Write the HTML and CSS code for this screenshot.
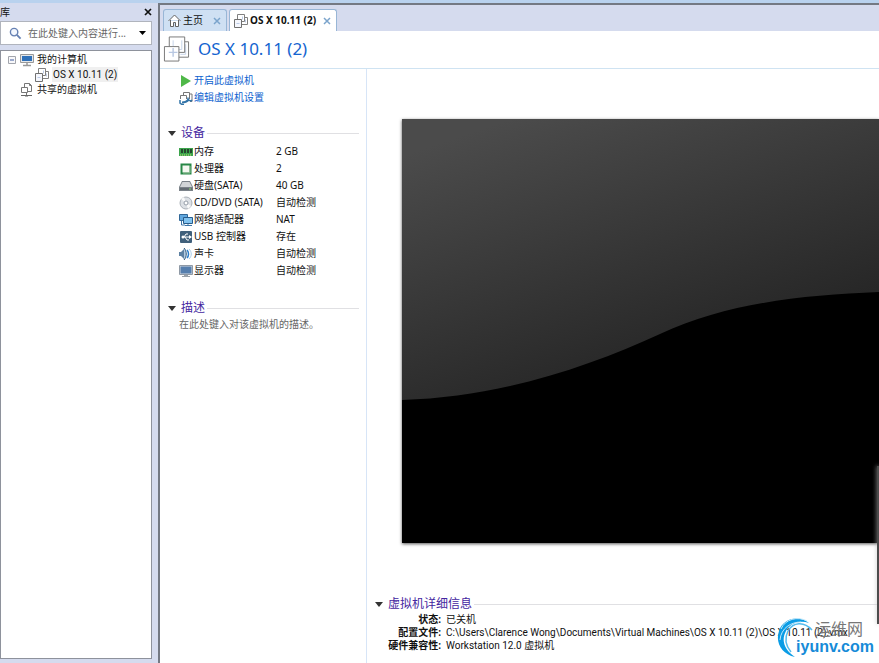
FILE: index.html
```html
<!DOCTYPE html>
<html lang="zh-CN">
<head>
<meta charset="utf-8">
<title>OS X 10.11 (2)</title>
<link rel="stylesheet" href="styles.css">
</head>
<body>
<svg class="defs" width="0" height="0" aria-hidden="true">
  <symbol id="vm" viewBox="0 0 28 28">
    <path d="M10.500 6.500h16v16h-16z" fill="#fff" stroke="#777"/>
    <path d="M23.500 9v10.500H18" fill="none" stroke="#c5d2e8"/>
    <path d="M6.500 1.500h16v16h-16z" fill="#fff" stroke="#777"/>
    <path d="M10.500 5v6M19.500 5v9.500H13" fill="none" stroke="#c5d2e8"/>
    <path d="M1.500 11.500h15v15h-15z" fill="#fff" stroke="#777"/>
    <path d="M6 17.500h4.500V13M10.500 17.500V22M10 17.500h5" fill="none" stroke="#b9c8e2" stroke-width="1.500"/>
  </symbol>
  <symbol id="vm-small" viewBox="0 0 14 14">
    <path d="M5.500 3.500h8v7h-8z" fill="#fff" stroke="#808080"/>
    <path d="M3.500.5h7v7h-7z" fill="#fff" stroke="#808080"/>
    <path d="M.5 5.500h7v8h-7z" fill="#f5f7fd" stroke="#707070"/>
    <path d="M2.500 9.500h3M8.500 2.500v3M11.500 5.500v3" stroke="#bccbe6"/>
  </symbol>
</svg>
<div class="app">
  <aside class="library">
    <header class="library-head"><h2>库</h2><button class="close" aria-label="关闭库"><svg viewBox="0 0 8 8"><path d="M1 1l6 6M7 1L1 7" stroke="#111" stroke-width="1.700"/></svg></button></header>
    <div class="search">
      <svg class="lens" viewBox="0 0 14 14"><circle cx="5.500" cy="5.500" r="4" fill="#f4f8ff" stroke="#6681b3" stroke-width="1.500"/><path d="M8.500 8.500l4 4" stroke="#6681b3" stroke-width="2"/></svg>
      <input type="text" aria-label="搜索" placeholder="在此处键入内容进行...">
      <button class="drop" aria-label="搜索选项"><svg viewBox="0 0 7 4"><path d="M0 0h7L3.500 4z"/></svg></button>
    </div>
    <ul class="tree">
      <li><div class="node"><button class="toggle" aria-label="折叠"><svg viewBox="0 0 9 9"><path d="M1.500 1.500h7v7h-7z" fill="#f8f8fa" stroke="#a2a5ac"/><path d="M3 5h4" stroke="#3d5aa0"/></svg></button>
        <svg class="ico" viewBox="0 0 14 14"><path d="M.5 1.500h13v8H.5z" fill="#e4e7ea" stroke="#999"/><path d="M2 3h10v5H2z" fill="#2f70b8"/><path d="M7 10v2M3 12.500h8" stroke="#999" stroke-width="1.500"/></svg><span>我的计算机</span></div>
        <ul><li><div class="node child"><svg class="ico"><use href="#vm-small"/></svg><span class="selected">OS X 10.11 (2)</span></div></li></ul></li>
      <li><div class="node shared"><svg class="ico" viewBox="0 0 14 14"><path d="M4.500 4V.5h5l2 2v6H8M9.500.5v2h2M1.500 4.500h6v5h-6zM6.500 10v2" fill="none" stroke="#777"/><path d="M1 12.500h4M8 12.500h4" stroke="#666"/><path d="M5 12h3v1.500H5z" fill="#666"/></svg><span>共享的虚拟机</span></div></li>
    </ul>
  </aside>
  <main class="workspace">
    <nav class="tabs">
      <div class="tab home"><a href="#home"><svg class="home-ico" viewBox="0 0 13 13"><path d="M.5 7l6-6 6 6M2.500 6v6.500h3v-4h2v4h3V6" fill="#fff" stroke="#626262"/></svg>主页</a><button class="close" aria-label="关闭主页"><svg viewBox="0 0 8 8"><path d="M1 1l6 6M7 1L1 7" stroke="#7ba4cc" stroke-width="1.500"/></svg></button></div>
      <div class="tab active"><a href="#vm-page"><svg class="ico"><use href="#vm-small"/></svg>OS X 10.11 (2)</a><button class="close" aria-label="关闭虚拟机"><svg viewBox="0 0 8 8"><path d="M1 1l6 6M7 1L1 7" stroke="#7ba4cc" stroke-width="1.500"/></svg></button></div>
    </nav>
    <header class="title"><svg><use href="#vm"/></svg><h1>OS X 10.11 (2)</h1></header>
    <div class="content">
      <section class="settings">
        <div class="actions">
          <a href="#start"><svg viewBox="0 0 14 14"><path d="M2 1l10 6-10 6z" fill="#4fb848"/></svg>开启此虚拟机</a>
          <a href="#edit"><svg viewBox="0 0 14 14"><path d="M4.500 4V1.500h6V3H13v7.500h-2M10.500 3v5M1.500 8V4.500h6V8" fill="none" stroke="#777"/><path d="M3 11.500c4 0 5-1 7-3" fill="none" stroke="#3274a8" stroke-width="2"/><path d="M1 9v3l2 1.500h2M9 6.500V9l3 1 1-1" fill="none" stroke="#3274a8" stroke-width="1.500"/></svg>编辑虚拟机设置</a>
        </div>
        <h2 class="section"><svg viewBox="0 0 8 5"><path d="M0 0h8L4 5z"/></svg>设备</h2>
        <table class="devices">
          <tr><th><svg viewBox="0 0 14 14"><path d="M0 3h14v8H0z" fill="#3ca44c"/><path d="M2 4h2v4H2zM5 4h2v4H5zM8 4h2v4H8zM11 4h2v4h-2z" fill="#24482c"/><path d="M1 10h12" stroke="#c7dc79" stroke-dasharray="1 1"/></svg>内存</th><td>2 GB</td></tr>
          <tr><th><svg viewBox="0 0 14 14"><path d="M2.500 2.500h9v9h-9z" fill="#f4f8f1" stroke="#278746" stroke-width="2"/><path d="M4 11h7V4" fill="none" stroke="#91bd94"/></svg>处理器</th><td>2</td></tr>
          <tr><th><svg viewBox="0 0 14 14"><path d="M3 2h8l3 6v4H0V8z" fill="#7b8289"/><path d="M3.500 3h7L13 8H1z" fill="#d2d5d8"/><path d="M1 10h12" stroke="#4f565e"/><path d="M10 10h2" stroke="#8cda72"/></svg>硬盘(SATA)</th><td>40 GB</td></tr>
          <tr><th><svg viewBox="0 0 14 14"><circle cx="7" cy="7" r="6" fill="#dce0e5" stroke="#aab0b8"/><path d="M7 7L2 3l3-2zM7 7l5 3-3 3z" fill="#fafafa"/><circle cx="7" cy="7" r="2" fill="#fff" stroke="#959da8"/></svg>CD/DVD (SATA)</th><td>自动检测</td></tr>
          <tr><th><svg viewBox="0 0 14 14"><path d="M.5 1.500h8v6h-8z" fill="#61a8df" stroke="#316797"/><path d="M4.500 4.500h9v6h-9z" fill="#82c3ef" stroke="#285c8b"/><path d="M2.500 8v4H6M6 12.500h7M9 11v1" fill="none" stroke="#3d76a9"/></svg>网络适配器</th><td>NAT</td></tr>
          <tr><th><svg viewBox="0 0 14 14"><rect x="1" y="1" width="12" height="12" rx="1" fill="#40607b"/><path d="M3 7h9M5 7l2-3h2M6 7l2 3h2" fill="none" stroke="#fff"/><circle cx="4" cy="7" r="1.500" fill="#fff"/><path d="M10 5l3 2-3 2z" fill="#fff"/></svg>USB 控制器</th><td>存在</td></tr>
          <tr><th><svg viewBox="0 0 14 14"><path d="M0 5h2l4-4v12L2 9H0z" fill="#5d81a3"/><path d="M5 1c3 3 3 9 0 12" fill="#b4cbe0" stroke="#315a7d"/><path d="M8 3c2 2 2 6 0 8" fill="none" stroke="#2b7ecb" stroke-width="1.500"/><path d="M10 2c3 3 3 7 0 10" fill="none" stroke="#a7cbe8"/></svg>声卡</th><td>自动检测</td></tr>
          <tr><th><svg viewBox="0 0 14 14"><path d="M.5 1.500h13v9H.5z" fill="#d4d9df" stroke="#8f99a5"/><path d="M1.500 2.500h11v7h-11z" fill="#567fae"/><path d="M5 11h4v1.500H5zM3 12h8v1H3z" fill="#9aa2aa"/></svg>显示器</th><td>自动检测</td></tr>
        </table>
        <h2 class="section"><svg viewBox="0 0 8 5"><path d="M0 0h8L4 5z"/></svg>描述</h2>
        <p class="description">在此处键入对该虚拟机的描述。</p>
      </section>
      <section class="overview">
        <svg class="preview" viewBox="0 0 477 424" preserveAspectRatio="none" role="img" aria-label="虚拟机屏幕">
          <defs><linearGradient id="shade" gradientUnits="userSpaceOnUse" x1="50" y1="20" x2="162" y2="350"><stop stop-color="#4b4b4b"/><stop offset="1" stop-color="#1e1e1e"/></linearGradient></defs>
          <path d="M0 0h477v424H0z" fill="url(#shade)"/>
          <path d="M0 281C100 278 188 247 258 215C325 184 400 176 477 173V424H0z" fill="#000"/>
        </svg>
        <div class="details">
          <h2 class="section"><svg viewBox="0 0 8 5"><path d="M0 0h8L4 5z"/></svg>虚拟机详细信息</h2>
          <dl>
            <dt>状态:</dt><dd>已关机</dd>
            <dt>配置文件:</dt><dd>C:\Users\Clarence Wong\Documents\Virtual Machines\OS X 10.11 (2)\OS X 10.11 (2).vmx</dd>
            <dt>硬件兼容性:</dt><dd>Workstation 12.0 虚拟机</dd>
          </dl>
        </div>
      </section>
    </div>
  </main>
</div>
<div class="window-edge"></div>
<div class="watermark">
  <svg viewBox="0 0 40 44"><path d="M33 7C23-1 7 2 3 15c-4 12 3 23 16 26C8 34 5 24 10 15 15 6 25 4 33 7z" fill="#0a9ce5"/><path d="M36 14C28 5 17 6 12 15c-4 8-2 15 3 21" fill="none" stroke="#54bbed" stroke-width="1.500"/><path d="M5 13C9 3 22 0 31 5M4 24C5 12 15 6 25 6" fill="none" stroke="#c5e9fa"/></svg>
  <div><span class="mark-cn">运维网</span><span class="mark-url">iyunv.com</span></div>
</div>
</body>
</html>
```

FILE: styles.css
```css
* { box-sizing: border-box; }
body {
  margin: 0;
  position: relative;
  overflow: hidden;
  background: #d5dbee;
  color: #111;
  font: 10px/15px "Noto Sans", "Noto Sans CJK SC", sans-serif;
}
h1, h2, p, ul, dl, dd { margin: 0; padding: 0; font-weight: 400; }
ul { list-style: none; }
a { color: inherit; text-decoration: none; }
button { border: 0; padding: 0; background: none; display: flex; }
svg { display: block; flex: none; }
.defs { position: absolute; }
.ico { width: 14px; height: 14px; }
.close svg { width: 8px; height: 8px; }

.app {
  display: grid;
  grid-template-columns: 152px minmax(0, 1fr);
  column-gap: 6px;
  height: 100vh;
  border-top: 3px solid #b9d2ee;
}
.library { display: flex; flex-direction: column; padding-bottom: 5px; }
.library-head { display: flex; justify-content: space-between; align-items: center; height: 18px; }
.library-head h2 { font-size: 10px; }
.search {
  display: flex;
  align-items: center;
  height: 24px;
  border: 1px solid #b0b4bd;
  background: #fff;
  padding: 0 5px 0 8px;
}
.lens { width: 13px; height: 13px; }
.search input { flex: 1; min-width: 0; border: 0; outline: 0; padding: 0 0 0 6px; font: inherit; background: none; }
.search input::placeholder { color: #666; opacity: 1; }
.drop svg { width: 7px; height: 4px; }
.tree { flex: 1; margin-top: 5px; padding-top: 1px; border: 1px solid #8e929c; background: #fff; }
.node { display: flex; align-items: center; height: 15px; gap: 3px; padding-left: 6px; }
.toggle { margin-right: 1px; }
.toggle svg { width: 9px; height: 9px; }
.child { padding-left: 34px; }
.shared { padding-left: 19px; }
.selected { background: #f0f0f0; padding: 0 1px; font-family: Roboto, "Noto Sans CJK SC", sans-serif; }

.workspace {
  display: flex;
  flex-direction: column;
  border: solid #747983;
  border-width: 2px 0 0 2px;
  background: #fff;
}
.tabs { display: flex; align-items: flex-end; gap: 2px; height: 26px; padding-left: 3px; background: #d5dbee; }
.tab {
  display: flex;
  align-items: center;
  justify-content: space-between;
  height: 22px;
  padding: 0 5px 0 4px;
  border: 1px solid #98b6d6;
  border-bottom: 0;
  border-radius: 3px 3px 0 0;
  background: #cfe0f3;
}
.tab a { display: flex; align-items: center; gap: 2px; }
.home { width: 64px; }
.home-ico { width: 13px; height: 13px; }
.active { width: 108px; background: #fff; font-weight: 700; }
.title { display: flex; align-items: center; gap: 8px; height: 38px; padding: 0 0 2px 3px; border-bottom: 1px solid #cfe3f2; }
.title svg { width: 27px; height: 28px; }
.title h1 { font-size: 17px; line-height: 24px; color: #1464d0; }

.content { flex: 1; display: grid; grid-template-columns: 207px minmax(0, 1fr); min-height: 0; }
.settings { padding: 3px 7px 0 8px; border-right: 1px solid #d7e5f7; }
.actions { padding-left: 11px; color: #0d62cf; }
.actions a { display: flex; align-items: center; gap: 1px; height: 17px; }
.actions svg, .devices svg { width: 14px; height: 14px; }
.section { display: flex; align-items: center; gap: 5px; height: 18px; font-size: 12px; line-height: 18px; color: #4426a0; white-space: nowrap; }
.section svg { width: 8px; height: 5px; fill: #333; }
.section::after { content: ""; flex: 1; height: 1px; margin-left: -3px; background: #e0e0e3; }
.actions + .section { margin-top: 18px; }
.devices { width: 100%; margin-top: 1px; border-collapse: collapse; }
.devices th, .devices td { height: 17px; padding: 0; line-height: 17px; font-weight: 400; text-align: left; white-space: nowrap; }
.devices th { display: flex; align-items: center; gap: 1px; padding-left: 11px; }
.devices td { width: 83px; }
.devices + .section { margin-top: 20px; }
.description { padding-left: 11px; color: #666; }

.overview { display: flex; flex-direction: column; padding: 50px 0 12px 8px; min-width: 0; }
.preview { flex: 1; min-height: 0; width: calc(100% - 27px); margin-left: 27px; box-shadow: 0 1px 3px #555; }
.details { margin-top: 52px; }
.details dl { display: grid; grid-template-columns: 66px minmax(0, 1fr); column-gap: 5px; line-height: 13px; white-space: nowrap; font-family: Roboto, "Noto Sans CJK SC", sans-serif; }
.details dt { text-align: right; font-weight: 700; }

.window-edge { position: absolute; right: 0; top: 466px; width: 2px; height: 158px; background: #4c4c4c; box-shadow: 0 0 4px #bbb; }
.watermark { position: absolute; right: 5px; bottom: 3px; display: flex; }
.watermark svg { width: 40px; height: 44px; margin-right: -20px; }
.watermark div { display: flex; flex-direction: column; padding-top: 4px; }
.mark-cn { padding-left: 19px; font-size: 16px; line-height: 18px; color: #777; }
.mark-url { font: 700 16px/18px "Liberation Sans", sans-serif; color: #168bd8; }
```
